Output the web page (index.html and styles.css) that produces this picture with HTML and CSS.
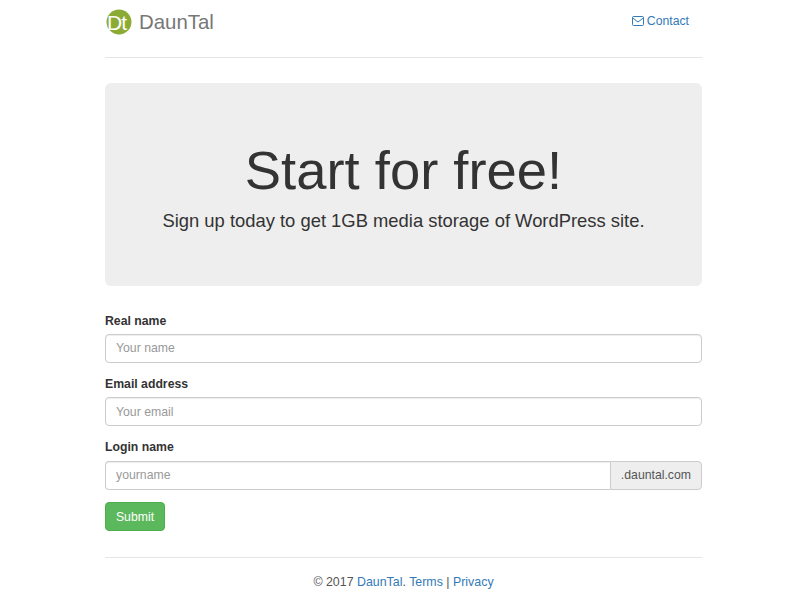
FILE: index.html
```html
<!DOCTYPE html>
<html lang="en">
<head>
  <meta charset="UTF-8">
  <title>DaunTal - Start for free</title>
  <link rel="stylesheet" href="styles.css">
</head>
<body>
  <div class="container">
    <div class="header">
      <a class="brand" href="#">
        <svg class="logo" width="26" height="26" viewBox="0 0 26 26">
          <circle cx="13" cy="13" r="12.5" fill="#8cab35"/>
          <text x="1" y="20.5" class="logo-text">Dt</text>
        </svg>
        <span class="brand-name">DaunTal</span>
      </a>
      <a class="contact" href="#">
        <svg class="envelope" width="12" height="10" viewBox="0 0 12 10" fill="none" stroke="#337ab7">
          <rect x="0.5" y="0.5" width="11" height="9" rx="1"/>
          <path d="M0.7 2 L6 6 L11.3 2"/>
        </svg>
        Contact
      </a>
    </div>

    <div class="jumbotron">
      <h1>Start for free!</h1>
      <p>Sign up today to get 1GB media storage of WordPress site.</p>
    </div>

    <form class="signup">
      <div class="form-group">
        <label for="name">Real name</label>
        <input type="text" id="name" class="form-control" placeholder="Your name">
      </div>
      <div class="form-group">
        <label for="email">Email address</label>
        <input type="text" id="email" class="form-control" placeholder="Your email">
      </div>
      <div class="form-group last">
        <label for="login">Login name</label>
        <div class="input-group">
          <input type="text" id="login" class="form-control" placeholder="yourname">
          <span class="addon">.dauntal.com</span>
        </div>
      </div>
      <button type="button" class="btn-submit">Submit</button>
    </form>

    <div class="footer">
      © 2017 <a href="#">DaunTal</a>. <a href="#">Terms</a> | <a href="#">Privacy</a>
    </div>
  </div>
</body>
</html>
```

FILE: styles.css
```css
* {
  box-sizing: border-box;
}
body {
  margin: 0;
  font-family: "Liberation Sans", Arial, sans-serif;
  font-size: 14px;
  line-height: 20px;
  color: #333;
  background: #fff;
}
a {
  color: #337ab7;
  text-decoration: none;
}
.container {
  width: 597px;
  margin-left: 105px;
}
.header {
  display: flex;
  justify-content: space-between;
  height: 58px;
  padding-top: 1px;
  border-bottom: 1px solid #e5e5e5;
}
.brand {
  display: flex;
  align-items: center;
  height: 42px;
  margin-left: 1px;
}
.logo-text {
  font-family: "Liberation Sans", sans-serif;
  font-size: 21px;
  letter-spacing: -1px;
  fill: #fff;
}
.brand-name {
  margin-left: 7px;
  font-size: 20.4px;
  color: #777;
}
.contact {
  display: flex;
  align-items: center;
  gap: 3px;
  height: 40px;
  padding-right: 13px;
  font-size: 12.25px;
}
.jumbotron {
  margin-top: 25px;
  height: 203px;
  padding-top: 49px;
  text-align: center;
  background: #eee;
  border-radius: 6px;
}
.jumbotron h1 {
  margin: 0;
  font-size: 54.4px;
  font-weight: 400;
  line-height: 77px;
}
.jumbotron p {
  margin: 0;
  font-size: 18.4px;
  line-height: 24px;
}
.signup {
  margin-top: 26.5px;
}
.form-group {
  margin-bottom: 13px;
}
.form-group.last {
  margin-bottom: 12.2px;
}
label {
  display: block;
  margin-bottom: 4px;
  font-size: 12.25px;
  line-height: 17.4px;
  font-weight: 700;
}
.form-control {
  display: block;
  width: 100%;
  height: 29px;
  padding: 6px 10px;
  font-family: inherit;
  font-size: 12.25px;
  color: #555;
  border: 1px solid #ccc;
  border-radius: 4px;
  box-shadow: inset 0 1px 1px rgba(0, 0, 0, .075);
}
.form-control::placeholder {
  color: #999;
  opacity: 1;
}
.input-group {
  display: flex;
}
.input-group .form-control {
  flex: 1;
  border-radius: 4px 0 0 4px;
  border-right: 0;
}
.addon {
  display: flex;
  align-items: center;
  height: 29px;
  padding: 0 10px 0 10px;
  font-size: 12.25px;
  color: #555;
  background: #eee;
  border: 1px solid #ccc;
  border-radius: 0 4px 4px 0;
}
.btn-submit {
  display: block;
  width: 60px;
  height: 29px;
  padding: 1px 0 0;
  font-family: inherit;
  font-size: 12.25px;
  color: #fff;
  background: #5cb85c;
  border: 1px solid #4cae4c;
  border-radius: 4px;
}
.footer {
  margin-top: 26px;
  padding-top: 14px;
  font-size: 12.4px;
  text-align: center;
  color: #555;
  border-top: 1px solid #e5e5e5;
}
```
